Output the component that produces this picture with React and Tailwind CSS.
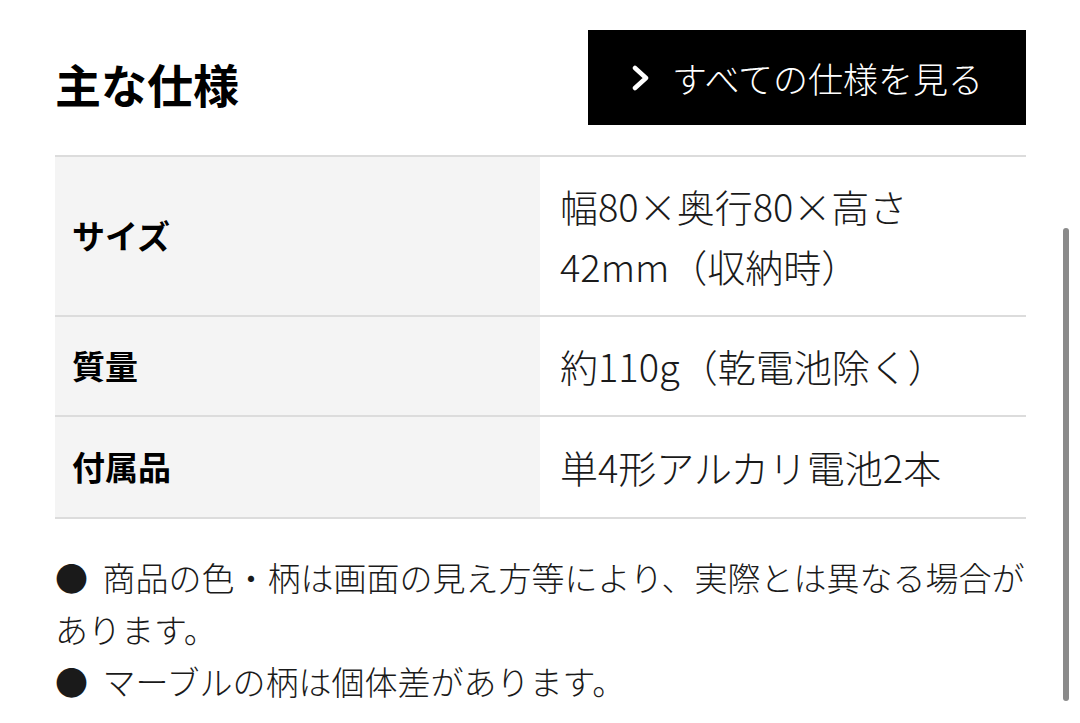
export default function App() {
  return (
    <div className="relative w-[1080px] h-[723px] overflow-hidden bg-white text-black font-['Noto_Sans_CJK_JP','Noto_Sans',sans-serif]">
      <div className="pl-[55px] pr-[54px] pt-[30px]">
        <div className="flex items-start justify-between">
          <h2 className="pt-[30px] text-[46px] leading-[46px] font-bold">主な仕様</h2>
          <button className="flex h-[95px] w-[438px] items-center justify-center gap-[21px] bg-black text-white">
            <svg width="20" height="26" viewBox="0 0 20 26" className="shrink-0">
              <polyline points="4,3 15,13 4,23" fill="none" stroke="white" strokeWidth="4.5" strokeLinecap="round" strokeLinejoin="round" />
            </svg>
            <span className="text-[35px] font-light leading-none font-['Noto_Sans_CJK_JP_Light','Noto_Sans_CJK_JP',sans-serif]">すべての仕様を見る</span>
          </button>
        </div>

        <div className="mt-[30px] border-t-2 border-[#dcdcdc]">
          {[
            ['サイズ', ['幅80×奥行80×高さ', '42mm（収納時）'], 'py-[19px]'],
            ['質量', ['約110g（乾電池除く）'], 'py-[19px]'],
            ['付属品', ['単4形アルカリ電池2本'], 'py-[20px]'],
          ].map(([label, lines, py]) => (
            <div key={label} className="grid grid-cols-[485px_1fr] border-b-2 border-[#dcdcdc]">
              <div className="flex items-center bg-[#f4f4f4] pl-[17px] text-[33px] font-bold">{label}</div>
              <div className={`${py} pl-[20px] text-[38px] font-light leading-[60px] text-[#1a1a1a] font-['Noto_Sans_CJK_JP_Light','Noto_Sans_CJK_JP',sans-serif]`}>
                {lines.map((l) => (
                  <div key={l}>{l}</div>
                ))}
              </div>
            </div>
          ))}
        </div>

        <div className="mt-[32px] text-[33px] font-light leading-[52px] text-[#1a1a1a] font-['Noto_Sans_CJK_JP_Light','Noto_Sans_CJK_JP',sans-serif]">
          <p>●&nbsp;&nbsp;商品の色・柄は画面の見え方等により、実際とは異なる場合があります。</p>
          <p>●&nbsp;&nbsp;マーブルの柄は個体差があります。</p>
        </div>
      </div>
      <div className="absolute left-[1063px] top-[228px] h-[473px] w-[6px] rounded-full bg-[#8a8a8a]" />
    </div>
  );
}
